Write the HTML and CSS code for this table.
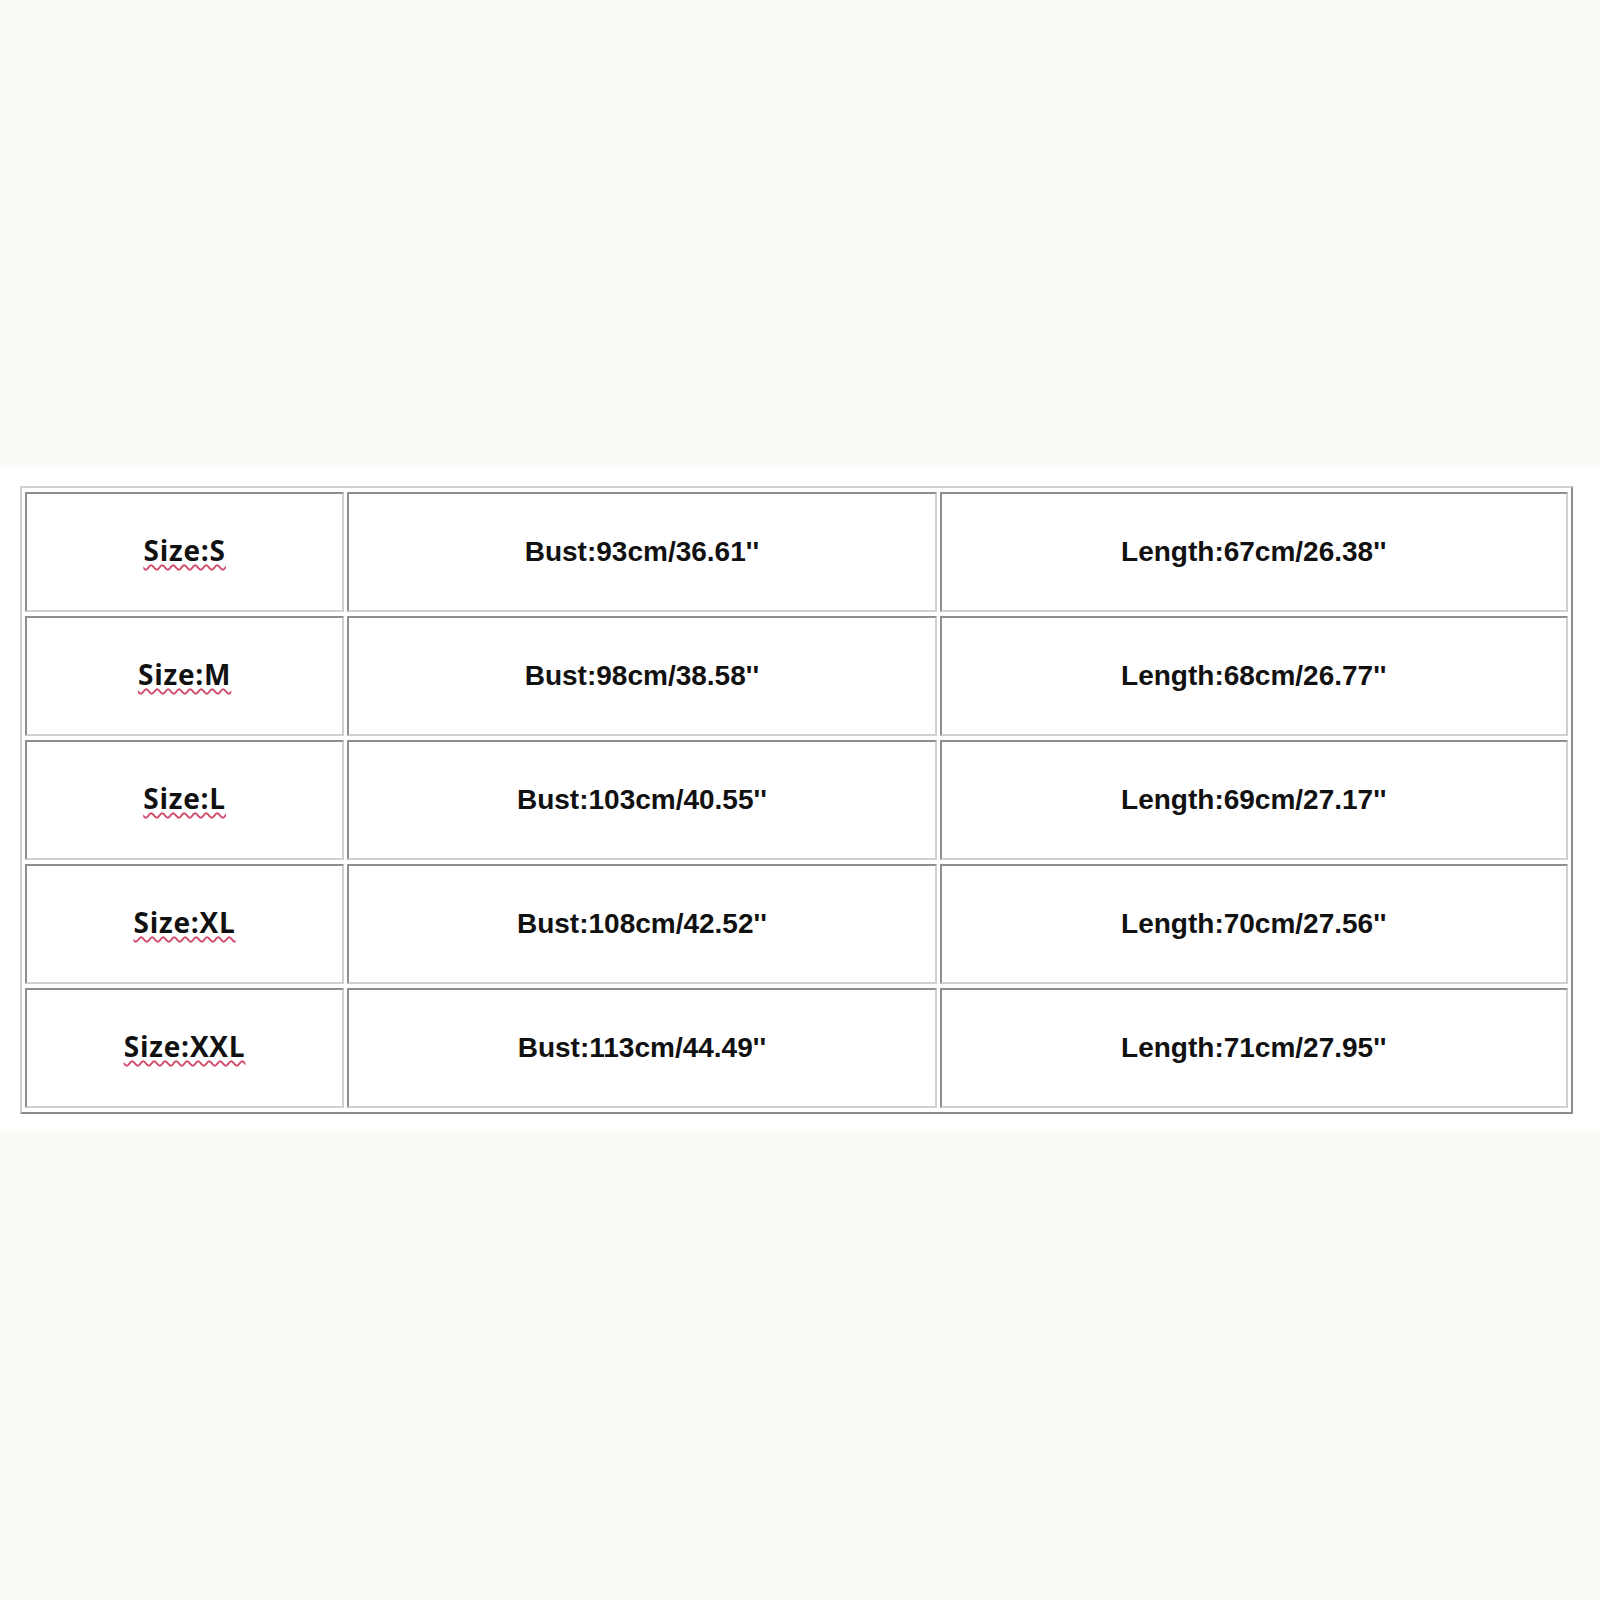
FILE: index.html
```html
<!DOCTYPE html>
<html>
<head>
<meta charset="utf-8">
<link rel="stylesheet" href="styles.css">
</head>
<body>
<div class="top"></div>
<section class="band">
  <table class="sizes">
    <colgroup>
      <col class="c1"><col class="c2"><col class="c3">
    </colgroup>
    <tr>
      <td><span class="size">Size:S</span></td>
      <td>Bust:93cm/36.61''</td>
      <td>Length:67cm/26.38''</td>
    </tr>
    <tr>
      <td><span class="size">Size:M</span></td>
      <td>Bust:98cm/38.58''</td>
      <td>Length:68cm/26.77''</td>
    </tr>
    <tr>
      <td><span class="size">Size:L</span></td>
      <td>Bust:103cm/40.55''</td>
      <td>Length:69cm/27.17''</td>
    </tr>
    <tr>
      <td><span class="size">Size:XL</span></td>
      <td>Bust:108cm/42.52''</td>
      <td>Length:70cm/27.56''</td>
    </tr>
    <tr>
      <td><span class="size">Size:XXL</span></td>
      <td>Bust:113cm/44.49''</td>
      <td>Length:71cm/27.95''</td>
    </tr>
  </table>
</section>
</body>
</html>
```
FILE: styles.css
```css
html, body {
  margin: 0;
  padding: 0;
  background: #fbfaf6;
}
body {
  width: 1600px;
  height: 1600px;
  font-family: "Liberation Sans", Arial, sans-serif;
}
.top {
  height: 468px;
}
.band {
  background: #ffffff;
  padding: 18px 0 17px 20px;
}
.sizes {
  table-layout: fixed;
  width: 1553px;
  border-collapse: separate;
  border-spacing: 3px 4px;
  border-style: solid;
  border-width: 2px;
  border-color: #d2d2d2 #8c8c8c #8c8c8c #d2d2d2;
}
.c1 { width: 319px; }
.c2 { width: 589px; }
.c3 { width: 628px; }
.sizes td {
  height: 116px;
  padding: 0;
  border-style: solid;
  border-width: 2px;
  border-color: #8e8e8e #d0d0d0 #d0d0d0 #8e8e8e;
  text-align: center;
  vertical-align: middle;
  font-weight: bold;
  font-size: 28px;
  color: #111111;
}
.size {
  display: inline-block;
  margin-bottom: 4px;
  font-family: "Open Sans", "Noto Sans", sans-serif;
  font-size: 28px;
  letter-spacing: 0.8px;
  text-decoration: underline wavy #d04a6a;
  text-decoration-thickness: 1.5px;
  text-underline-offset: 3px;
}
```
